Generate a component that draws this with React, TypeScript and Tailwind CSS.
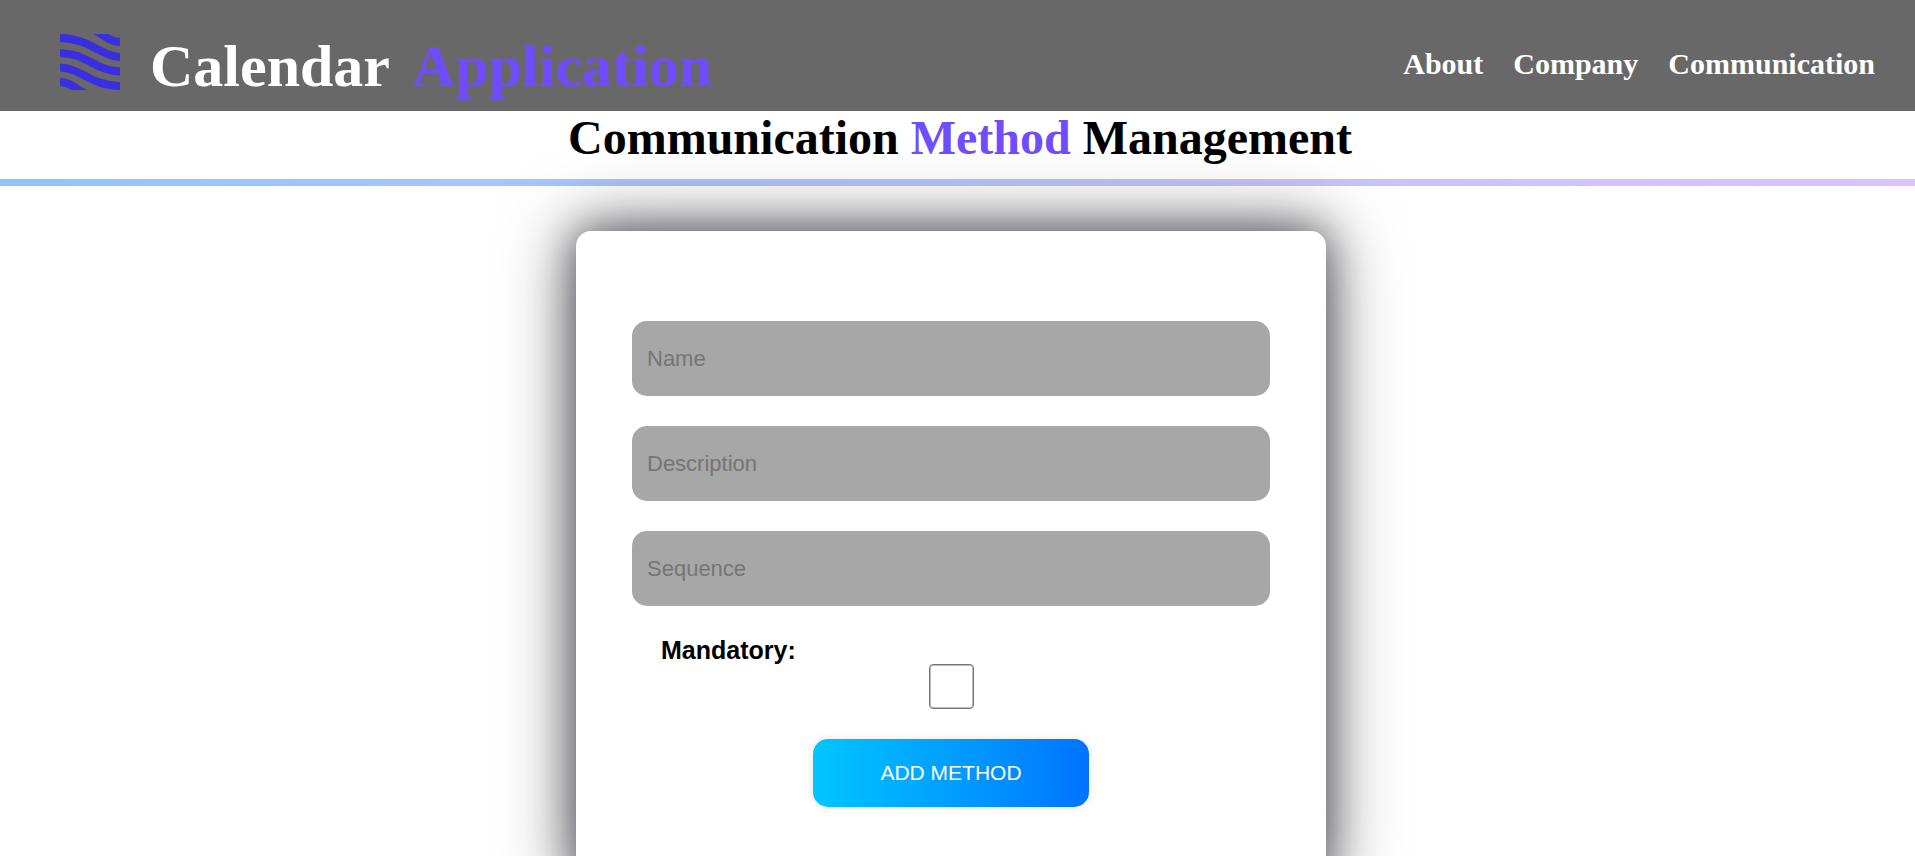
const fields = ["Name", "Description", "Sequence"];
const links = ["About", "Company", "Communication"];

function Logo() {
  return (
    <svg className="h-14 w-[60px] shrink-0" viewBox="0 0 60 56" fill="none" stroke="#3a2fe0" strokeWidth="8" aria-hidden="true">
      <path d="M34 -4C44 0 48 8 61 8" />
      <path d="M-1 4C30 4 41 23 61 23" />
      <path d="M-1 19C27 19 36 37.500 61 37.500" />
      <path d="M-1 33.500C21 33.500 30 52 61 52" />
      <path d="M-1 48C10 48 14 54 26 60" />
    </svg>
  );
}

export default function App() {
  return (
    <div className="min-h-screen overflow-x-hidden bg-white font-['Liberation_Serif',serif]">
      <header className="flex h-[111px] items-center justify-between bg-[#686868] pr-10 pl-[60px] font-bold">
        <div className="flex items-center gap-[30px] pt-3">
          <Logo />
          <h1 className="flex gap-[22px] pt-2 text-[60px] leading-[68px] text-white">
            <span>Calendar</span>
            <span className="text-[#6f4dff]">Application</span>
          </h1>
        </div>
        <nav className="flex gap-[30px] pt-4 text-[30px] leading-8 text-white">
          {links.map((link) => (
            <a key={link} href={`#${link.toLowerCase()}`}>{link}</a>
          ))}
        </nav>
      </header>

      <h2 className="flex h-[68px] justify-center pl-[5px] text-5xl leading-[54px] font-bold text-black">
        <span>Communication <span className="text-[#6f4dff]">Method</span> Management</span>
      </h2>
      <div className="h-[7px] bg-linear-to-r from-[#90c5fd] to-[#dcc2fb]" />

      <main className="pt-[45px] pr-[13px] pb-12">
        <form
          onSubmit={(event) => event.preventDefault()}
          className="mx-auto flex max-w-[750px] flex-col items-center rounded-[15px] bg-white px-14 pt-[90px] pb-20 font-['Liberation_Sans',sans-serif] shadow-[0_0_40px_rgba(10,10,25,0.5),0_0_75px_rgba(0,0,5,0.55)]"
        >
          <div className="flex w-full flex-col gap-[30px]">
            {fields.map((field) => (
              <input
                key={field}
                type="text"
                aria-label={field}
                placeholder={field}
                className="h-[75px] w-full rounded-[15px] bg-[#a7a7a7] px-[15px] text-[22px] text-black placeholder:text-[#757575]"
              />
            ))}
          </div>
          <label htmlFor="mandatory" className="mt-[30px] w-full px-[29px] text-[25px] leading-7 font-bold text-black">
            Mandatory:
          </label>
          <input
            id="mandatory"
            type="checkbox"
            className="size-[45px] appearance-none rounded-[4px] border border-[#767676] bg-white shadow-[inset_0_0_0_1px_#bababa] checked:bg-[#0075ff]"
          />
          <button
            type="submit"
            className="mt-[30px] h-[68px] w-[276px] rounded-[15px] bg-linear-to-r from-[#00c6ff] to-[#0072ff] text-[21px] text-white shadow-[0_0_10px_rgba(0,0,0,0.1)]"
          >
            ADD METHOD
          </button>
        </form>
      </main>
    </div>
  );
}
